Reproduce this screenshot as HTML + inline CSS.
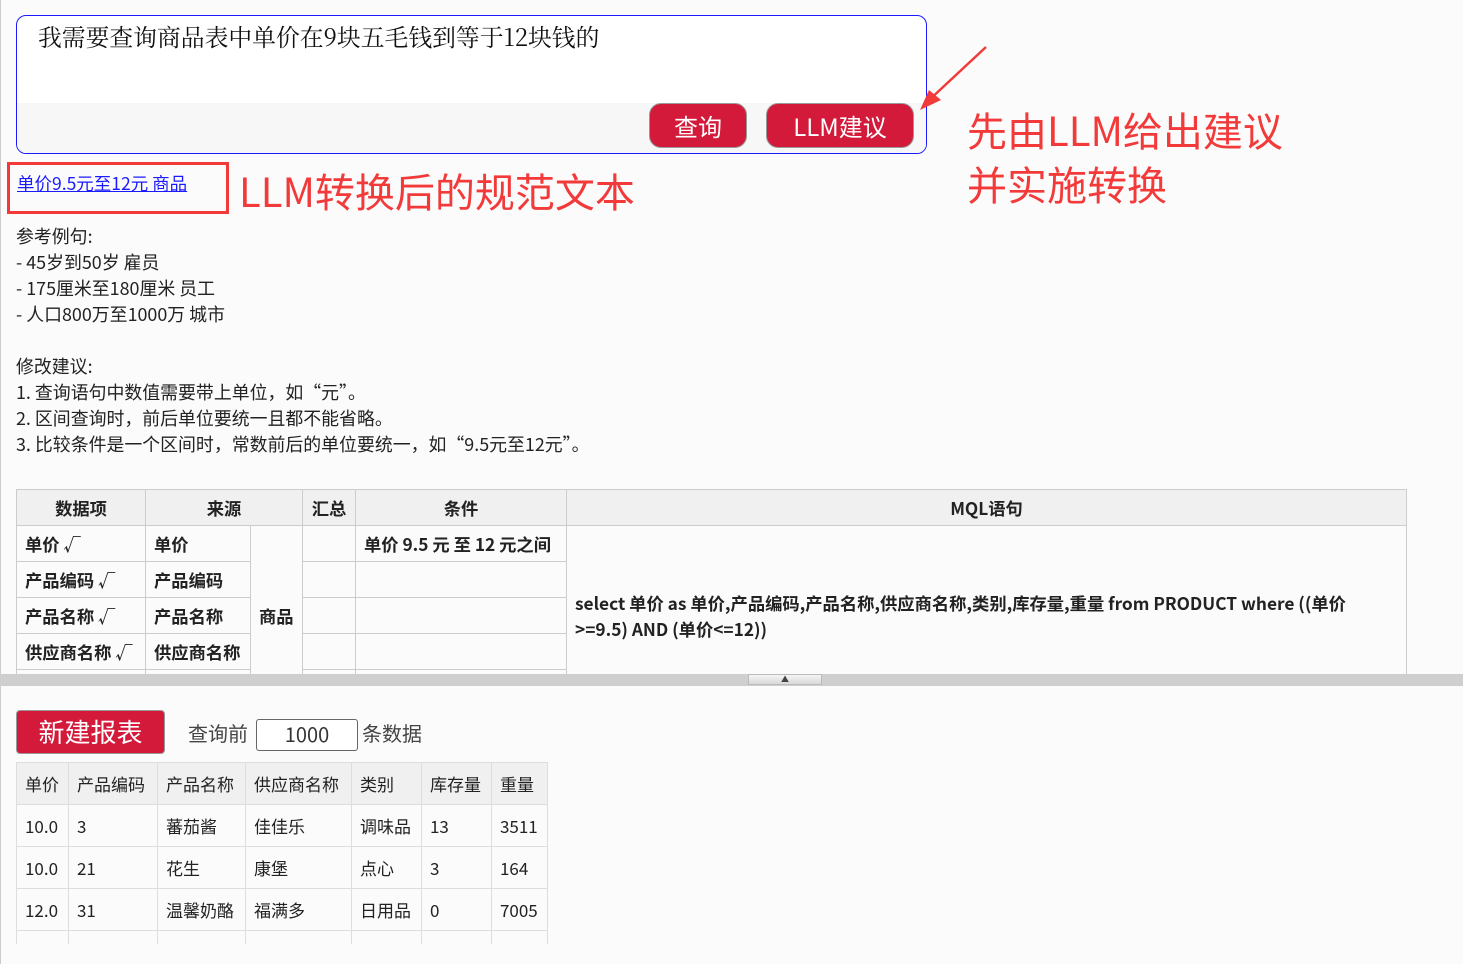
<!DOCTYPE html>
<html><head><meta charset="utf-8"><style>
*{margin:0;padding:0;box-sizing:border-box}
body{width:1463px;height:964px;background:#fbfbfb;font-family:"Noto Sans CJK SC","Liberation Sans",sans-serif;position:relative;overflow:hidden;color:#222}
.abs{position:absolute}
.ta{left:16px;top:15px;width:911px;height:139px;border:1px solid #1a1aff;border-radius:10px;background:#fff;overflow:hidden}
.ta .lower{position:absolute;left:0;right:0;top:87px;bottom:0;background:#f7f7f7}
.ta .txt{position:absolute;left:21px;top:3px;font-family:"Noto Serif CJK SC","Liberation Serif",serif;font-size:23.8px;color:#111;white-space:nowrap}
.btn{background:#d31a3a;color:#fff;border-radius:12px;border:1px solid #999;text-align:center}
.red{color:#f23a3a}
.lines{left:16px;top:223px;font-size:17.9px;line-height:26px;color:#222;white-space:nowrap}
table{border-collapse:collapse;position:absolute}
.t1{font-weight:bold;font-size:17.3px}
.t1 td,.t1 th{border:1px solid #ccc;padding:0 8px;height:36px;white-space:nowrap}
.t1 th{background:#f0f0f0;text-align:center}
.t2{font-size:17px}
.t2 td{border:1px solid #ddd;padding:0 8px;height:42px;white-space:nowrap}
.t2 tr:first-child td{background:#f0f0f0}
</style></head><body>
<div class="abs" style="left:0;top:0;width:1px;height:964px;background:#ccc"></div>
<div class="abs ta"><div class="lower"></div><div class="txt">我需要查询商品表中单价在9块五毛钱到等于12块钱的</div></div>
<div class="abs btn" style="left:649px;top:103px;width:98px;height:45px;font-size:24px;line-height:43px">查询</div>
<div class="abs btn" style="left:766px;top:103px;width:148px;height:45px;font-size:24px;line-height:43px">LLM建议</div>
<svg class="abs" style="left:915px;top:40px" width="80" height="80"><line x1="71" y1="7" x2="12" y2="62" stroke="#f23a3a" stroke-width="2.5"/><polygon points="5,70 14,50 26,60" fill="#f23a3a"/></svg>
<div class="abs red" style="left:967px;top:102px;font-size:40px;line-height:54px">先由LLM给出建议<br>并实施转换</div>
<div class="abs" style="left:7px;top:162px;width:222px;height:52px;border:3px solid #f23a3a"></div>
<div class="abs" style="left:17px;top:171px;font-size:17.5px;color:#1a1aff;text-decoration:underline;white-space:nowrap">单价9.5元至12元 商品</div>
<div class="abs red" style="left:239px;top:163px;font-size:40px;line-height:54px">LLM转换后的规范文本</div>
<div class="abs lines">参考例句:<br>- 45岁到50岁 雇员<br>- 175厘米至180厘米 员工<br>- 人口800万至1000万 城市<br><br>修改建议:<br>1. 查询语句中数值需要带上单位，如“元”。<br>2. 区间查询时，前后单位要统一且都不能省略。<br>3. 比较条件是一个区间时，常数前后的单位要统一，如“9.5元至12元”。</div>
<div class="abs" style="left:0;top:489px;width:1463px;height:185px;overflow:hidden">
<table class="t1" style="left:16px;top:0">
<tr><th style="width:129px">数据项</th><th colspan="2" style="width:157px">来源</th><th style="width:53px">汇总</th><th style="width:211px">条件</th><th style="width:840px">MQL语句</th></tr>
<tr><td>单价 √</td><td style="width:105px">单价</td><td rowspan="5" style="width:52px">商品</td><td></td><td>单价 9.5 元 至 12 元之间</td><td rowspan="5" style="white-space:normal;line-height:26px;vertical-align:top;padding-top:64px;padding-right:8px">select 单价 as 单价,产品编码,产品名称,供应商名称,类别,库存量,重量 from PRODUCT where ((单价 &gt;=9.5) AND (单价&lt;=12))</td></tr>
<tr><td>产品编码 √</td><td>产品编码</td><td></td><td></td></tr>
<tr><td>产品名称 √</td><td>产品名称</td><td></td><td></td></tr>
<tr><td>供应商名称 √</td><td>供应商名称</td><td></td><td></td></tr>
<tr><td>&nbsp;</td><td></td><td></td><td></td></tr>
</table></div>
<div class="abs" style="left:0;top:674px;width:1463px;height:12px;background:#cfcfcf"></div>
<div class="abs" style="left:748px;top:674px;width:74px;height:11px;background:linear-gradient(#f5f5f5,#d8d8d8);border:1px solid #bbb;font-size:8px;text-align:center;line-height:10px;color:#444">▲</div>
<div class="abs btn" style="left:16px;top:710px;width:149px;height:44px;font-size:26px;line-height:42px;border-radius:4px">新建报表</div>
<div class="abs" style="left:188px;top:718px;font-size:20px;color:#444">查询前</div>
<div class="abs" style="left:256px;top:719px;width:102px;height:32px;border:1px solid #666;border-radius:3px;background:#fff;font-size:20px;text-align:center;line-height:28px;color:#333">1000</div>
<div class="abs" style="left:362px;top:718px;font-size:20px;color:#444">条数据</div>
<div class="abs" style="left:0;top:762px;width:600px;height:182px;overflow:hidden">
<table class="t2" style="left:16px;top:0">
<tr><td style="width:52px">单价</td><td style="width:89px">产品编码</td><td style="width:88px">产品名称</td><td style="width:106px">供应商名称</td><td style="width:70px">类别</td><td style="width:70px">库存量</td><td style="width:56px">重量</td></tr>
<tr><td>10.0</td><td>3</td><td>蕃茄酱</td><td>佳佳乐</td><td>调味品</td><td>13</td><td>3511</td></tr>
<tr><td>10.0</td><td>21</td><td>花生</td><td>康堡</td><td>点心</td><td>3</td><td>164</td></tr>
<tr><td>12.0</td><td>31</td><td>温馨奶酪</td><td>福满多</td><td>日用品</td><td>0</td><td>7005</td></tr>
<tr><td>&nbsp;</td><td></td><td></td><td></td><td></td><td></td><td></td></tr>
</table></div>
</body></html>
